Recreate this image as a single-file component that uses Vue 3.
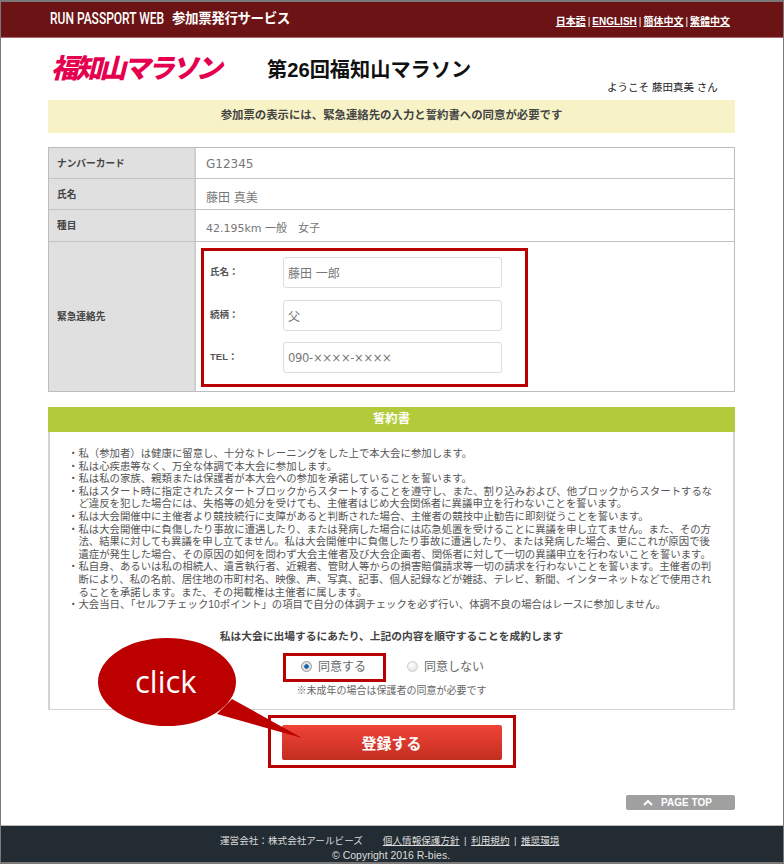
<template>
  <div class="page">
    <header class="head">
      <div class="head__brand"><span class="head__latin">RUN PASSPORT WEB</span><span class="head__jp">参加票発行サービス</span></div>
      <nav class="head__lang">
        <template v-for="(l, i) in langs" :key="l">
          <span v-if="i" class="sep">|</span><a href="#">{{ l }}</a>
        </template>
      </nav>
    </header>

    <main class="main">
      <div class="title-row">
        <div class="logo">福知山マラソン</div>
        <h1 class="title">第26回福知山マラソン</h1>
      </div>
      <p class="welcome">ようこそ 藤田真美 さん</p>
      <p class="notice">参加票の表示には、緊急連絡先の入力と誓約書への同意が必要です</p>

      <div class="info">
        <div class="info__row r1">
          <div class="info__th">ナンバーカード</div>
          <div class="info__td">G12345</div>
        </div>
        <div class="info__row r2">
          <div class="info__th">氏名</div>
          <div class="info__td">藤田 真美</div>
        </div>
        <div class="info__row r3">
          <div class="info__th">種目</div>
          <div class="info__td">42.195km 一般　女子</div>
        </div>
        <div class="info__row r4">
          <div class="info__th info__th--mid">緊急連絡先</div>
          <div class="contact">
            <div class="contact__row" v-for="f in contact" :key="f.label">
              <label class="contact__label">{{ f.label }}</label>
              <input class="contact__input" :class="{ 'contact__input--tel': f.tel }" type="text" :value="f.value" readonly />
            </div>
            <div class="mark mark--contact"></div>
          </div>
        </div>
      </div>

      <section class="oath">
        <h2 class="oath__head">誓約書</h2>
        <div class="oath__body">
          <ul class="oath__list">
            <li v-for="(item, i) in oath" :key="i">
              <span v-for="line in item" :key="line" class="line">{{ line }}</span>
            </li>
          </ul>
          <p class="oath__pledge">私は大会に出場するにあたり、上記の内容を順守することを成約します</p>
          <div class="radios">
            <div class="radio radio--on"><i></i>同意する<div class="mark mark--radio"></div></div>
            <div class="radio"><i></i>同意しない</div>
          </div>
          <p class="oath__note">※未成年の場合は保護者の同意が必要です</p>
        </div>
      </section>

      <div class="submit">
        <button class="submit__btn" type="button">登録する</button>
        <div class="mark mark--submit"></div>
        <svg class="callout" width="210" height="124" viewBox="0 0 210 124">
          <ellipse cx="69" cy="44" rx="69" ry="44" fill="#bc0000" />
          <path d="M134 61 L204 100 L119 76 Z" fill="#bc0000" />
        </svg>
        <span class="callout__text">click</span>
      </div>

      <div class="pagetop-row">
        <a class="pagetop" href="#">
          <svg width="10" height="7" viewBox="0 0 10 7"><path d="M1 6 L5 2 L9 6" fill="none" stroke="#fff" stroke-width="2" /></svg>
          PAGE TOP
        </a>
      </div>
    </main>

    <footer class="foot">
      <div class="foot__links">
        <span class="foot__company">運営会社：株式会社アールビーズ</span>
        <a href="#">個人情報保護方針</a><span class="sep">|</span><a href="#">利用規約</a><span class="sep">|</span><a href="#">推奨環境</a>
      </div>
      <div class="foot__copy">© Copyright 2016 R-bies.</div>
    </footer>
  </div>
</template>

<script setup>
const langs = ['日本語', 'ENGLISH', '簡体中文', '繁體中文']

const contact = [
  { label: '氏名：', value: '藤田 一郎' },
  { label: '続柄：', value: '父' },
  { label: 'TEL：', value: '090-××××-××××', tel: true }
]

const oath = [
  ['・私（参加者）は健康に留意し、十分なトレーニングをした上で本大会に参加します。'],
  ['・私は心疾患等なく、万全な体調で本大会に参加します。'],
  ['・私は私の家族、親類または保護者が本大会への参加を承諾していることを誓います。'],
  ['・私はスタート時に指定されたスタートブロックからスタートすることを遵守し、また、割り込みおよび、他ブロックからスタートするな', '　ど違反を犯した場合には、失格等の処分を受けても、主催者はじめ大会関係者に異議申立を行わないことを誓います。'],
  ['・私は大会開催中に主催者より競技続行に支障があると判断された場合、主催者の競技中止勧告に即刻従うことを誓います。'],
  ['・私は大会開催中に負傷したり事故に遭遇したり、または発病した場合には応急処置を受けることに異議を申し立てません。また、その方', '　法、結果に対しても異議を申し立てません。私は大会開催中に負傷したり事故に遭遇したり、または発病した場合、更にこれが原因で後', '　遺症が発生した場合、その原因の如何を問わず大会主催者及び大会企画者、関係者に対して一切の異議申立を行わないことを誓います。'],
  ['・私自身、あるいは私の相続人、遺言執行者、近親者、管財人等からの損害賠償請求等一切の請求を行わないことを誓います。主催者の判', '　断により、私の名前、居住地の市町村名、映像、声、写真、記事、個人記録などが雑誌、テレビ、新聞、インターネットなどで使用され', '　ることを承諾します。また、その掲載権は主催者に属します。'],
  ['・大会当日、「セルフチェック10ポイント」の項目で自分の体調チェックを必ず行い、体調不良の場合はレースに参加しません。']
]
</script>

<style>
html, body {
  margin: 0;
  background: #fff;
}
</style>

<style scoped>
.page {
  box-sizing: border-box;
  width: 784px;
  height: 864px;
  border: 1px solid #7a7a7a;
  border-width: 2px 1px;
  display: flex;
  flex-direction: column;
  overflow: hidden;
  font-family: "Liberation Sans", "Noto Sans CJK JP", sans-serif;
  color: #333;
  background: #fff;
}

.head {
  box-sizing: border-box;
  height: 36px;
  flex: none;
  background: #6b1315;
  border-bottom: 1px solid #a8686a;
  display: flex;
  justify-content: space-between;
  padding: 0 53px 0 49px;
  color: #fff;
}

.head__brand {
  display: flex;
  line-height: 34px;
  white-space: nowrap;
}

.head__latin {
  width: 122px;
  font-family: "Roboto", sans-serif;
  font-size: 16px;
  font-weight: 500;
  transform: scaleX(0.75);
  transform-origin: left center;
}

.head__jp {
  font-size: 13.5px;
  font-weight: 700;
  letter-spacing: -0.4px;
}

.head__lang {
  font-size: 10px;
  font-weight: 700;
  line-height: 39px;
  white-space: nowrap;
}

.head__lang a {
  color: #fff;
}

.head__lang .sep {
  margin: 0 2px;
  font-weight: 400;
}

.main {
  flex: 1;
  min-height: 0;
  padding: 0 48px 0 47px;
  position: relative;
}

.title-row {
  display: flex;
  align-items: center;
  height: 21px;
  padding-top: 20px;
}

.logo {
  margin-left: 3px;
  width: 216px;
  flex: none;
  font-size: 27px;
  font-weight: 900;
  font-style: italic;
  letter-spacing: -2.9px;
  color: #e5004f;
  white-space: nowrap;
  line-height: 38px;
}

.title {
  margin: 0;
  font-size: 20.2px;
  font-weight: 700;
  color: #111;
  white-space: nowrap;
}

.welcome {
  margin: 1px 0 0;
  padding-left: 559px;
  font-size: 10.5px;
  line-height: 15px;
  color: #222;
  white-space: nowrap;
}

.notice {
  margin: 5px 0 0;
  height: 33px;
  background: #f8f3c6;
  font-size: 11.4px;
  font-weight: 700;
  line-height: 31px;
  text-align: center;
  color: #444;
}

.info {
  margin-top: 14px;
  border: 1px solid #bdbdbd;
}

.info__row {
  display: flex;
  border-bottom: 1px solid #c4c4c4;
}

.info__row:last-child {
  border-bottom: none;
}

.r1, .r2 {
  height: 30px;
}

.r3 {
  height: 31px;
}

.r4 {
  height: 149px;
}

.info__th {
  box-sizing: border-box;
  width: 147px;
  flex: none;
  padding: 9px 0 0 8px;
  background: #e0e0e0;
  border-right: 2px solid #cfcfcf;
  font-size: 9.7px;
  font-weight: 700;
  line-height: 14px;
  color: #444;
}

.info__th--mid {
  padding-top: 68px;
}

.info__td {
  padding-left: 10px;
  font-family: "DejaVu Sans", "Noto Sans CJK JP", sans-serif;
  font-size: 12px;
  line-height: 33px;
  color: #777;
}

.r2 .info__td, .r3 .info__td {
  line-height: 38px;
}

.r3 .info__td {
  font-size: 11px;
}

.contact {
  position: relative;
  padding: 15px 0 0 14px;
  display: flex;
  flex-direction: column;
  gap: 11.5px;
}

.contact__row {
  display: flex;
}

.contact__label {
  width: 73px;
  font-size: 9.5px;
  font-weight: 700;
  line-height: 29px;
  color: #555;
}

.contact__input {
  box-sizing: border-box;
  width: 219px;
  height: 31px;
  padding: 0 4px;
  border: 1px solid #dcdcdc;
  border-radius: 3px;
  outline: none;
  font-family: "DejaVu Sans", "Noto Sans CJK JP", sans-serif;
  font-size: 12px;
  color: #777;
  background: #fff;
}

.contact__input--tel {
  font-size: 11.5px;
  letter-spacing: -0.3px;
}

.mark {
  position: absolute;
  box-sizing: border-box;
  border: 3px solid #b80000;
  pointer-events: none;
}

.mark--contact {
  left: 5px;
  top: 6px;
  width: 327px;
  height: 139px;
}

.oath {
  margin-top: 15px;
}

.oath__head {
  margin: 0;
  height: 25px;
  background: #b3cb3a;
  font-size: 12.3px;
  font-weight: 700;
  line-height: 24px;
  text-align: center;
  color: #fff;
}

.oath__body {
  box-sizing: border-box;
  height: 278px;
  border: 1px solid #d4d4d4;
  border-width: 0 2px 1px 2px;
  padding-top: 16px;
}

.oath__list {
  margin: 0;
  padding: 0 0 0 18px;
  list-style: none;
  font-size: 10.4px;
  line-height: 12.6px;
  color: #555;
  white-space: nowrap;
}

.line {
  display: block;
}

.oath__pledge {
  margin: 17px 0 0;
  font-size: 10.75px;
  font-weight: 700;
  line-height: 14px;
  text-align: center;
  color: #444;
}

.radios {
  margin-top: 12px;
  padding-left: 251px;
  display: flex;
  gap: 41px;
  font-size: 12px;
  line-height: 24px;
  color: #666;
}

.radio {
  position: relative;
  display: flex;
  align-items: center;
  gap: 6px;
}

.radio i {
  width: 9px;
  height: 9px;
  border-radius: 50%;
  border: 1px solid #ccc;
  background: radial-gradient(circle at 40% 35%, #fff, #ddd);
}

.radio--on i {
  border-color: #999;
  background: radial-gradient(circle, #1565a8 0 30%, #e8e8e8 42%, #ccc 100%);
}

.mark--radio {
  left: -18px;
  top: -2px;
  width: 103px;
  height: 29px;
}

.oath__note {
  margin: 6px 0 0;
  font-size: 10px;
  line-height: 12px;
  text-align: center;
  color: #666;
}

.submit {
  position: relative;
  height: 50px;
  padding-top: 15px;
  display: flex;
  justify-content: center;
}

.submit__btn {
  width: 220px;
  height: 35px;
  border: none;
  border-radius: 2px;
  background: linear-gradient(#f04438, #c22e1f);
  color: #fff;
  font-family: inherit;
  font-size: 15px;
  font-weight: 700;
}

.mark--submit {
  left: 220px;
  top: 5px;
  width: 248px;
  height: 53px;
}

.callout {
  position: absolute;
  left: 50px;
  top: -72px;
}

.callout__text {
  position: absolute;
  left: 87px;
  top: -49px;
  font-family: "Open Sans", sans-serif;
  font-size: 31px;
  line-height: 40px;
  color: #fff;
}

.pagetop-row {
  margin-top: 20px;
  display: flex;
  justify-content: flex-end;
}

.pagetop {
  box-sizing: border-box;
  width: 109px;
  height: 15px;
  padding-right: 6px;
  border-radius: 2px;
  background: #a0a0a0;
  display: flex;
  align-items: center;
  justify-content: center;
  gap: 8px;
  color: #fff;
  font-size: 10px;
  font-weight: 700;
  text-decoration: none;
}

.foot {
  box-sizing: border-box;
  flex: none;
  height: 37px;
  padding-top: 7px;
  border-top: 1px solid #b8b8b8;
  background: #222c32;
  color: #ddd;
  font-size: 9.6px;
  line-height: 15px;
}

.foot__links {
  padding-left: 219px;
  white-space: nowrap;
}

.foot__links a {
  color: #ddd;
}

.foot__company {
  margin-right: 20px;
}

.foot__links .sep {
  margin: 0 4.5px;
}

.foot__copy {
  padding-left: 331px;
  font-size: 10.5px;
}
</style>
